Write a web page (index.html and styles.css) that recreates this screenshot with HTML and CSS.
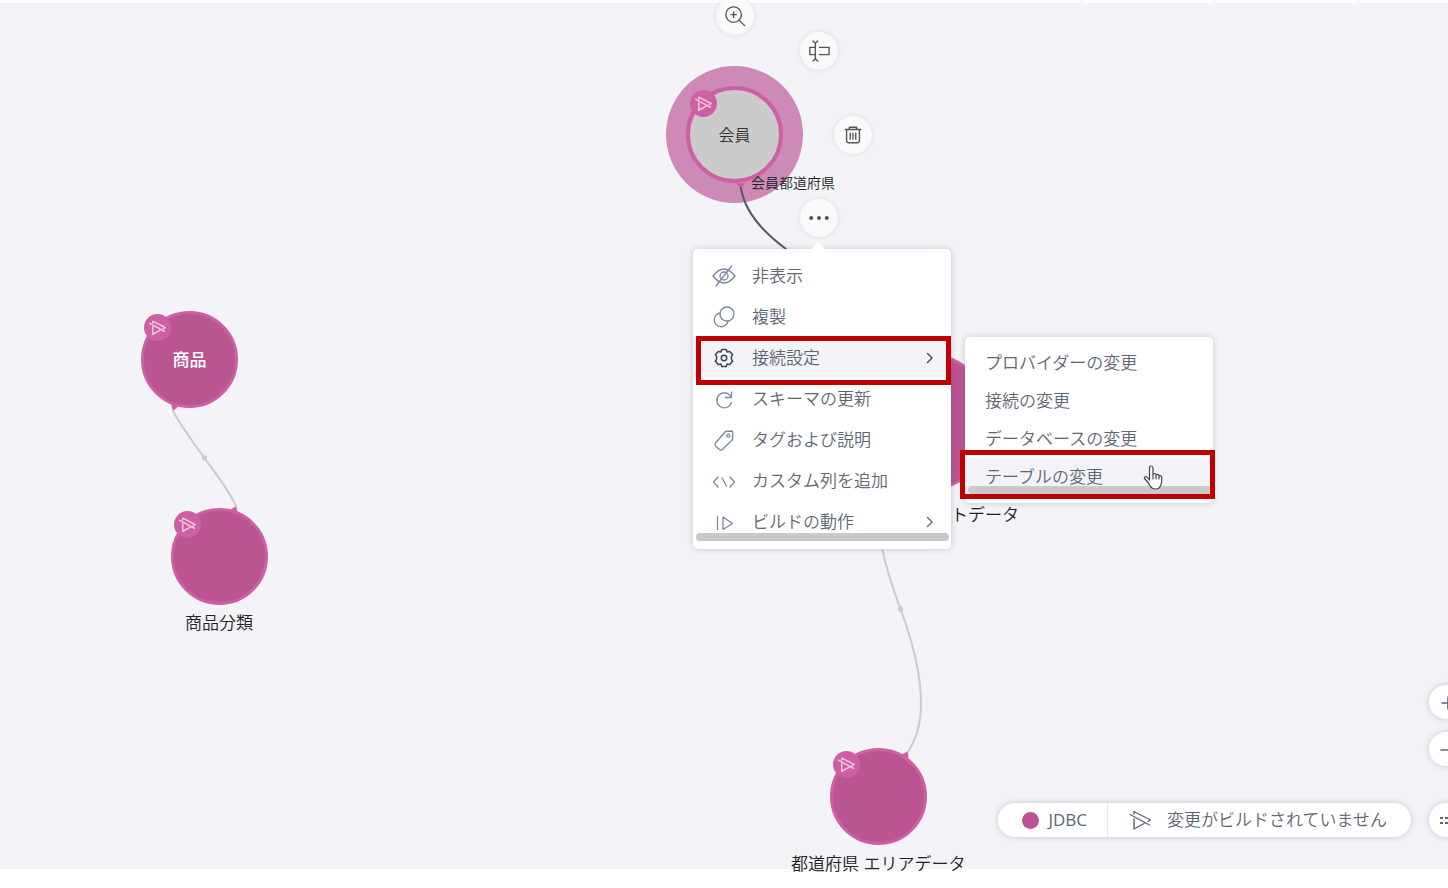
FILE: index.html
```html
<!DOCTYPE html>
<html lang="ja">
<head>
<meta charset="utf-8">
<title>データモデル</title>
<link rel="stylesheet" href="styles.css">
</head>
<body>
<svg class="symbols" aria-hidden="true">
  <symbol id="unbuilt" viewBox="0 0 24 20">
    <path d="M1 4.500 20.500 15M5 4V1.500L21.500 10l-2.500 1.500M15 13.500 5 19V9"/>
  </symbol>
</svg>
<div class="page">
  <header class="topbar"><span class="tab tab-a"></span><span class="tab tab-b"></span><span class="tab tab-c"></span></header>
  <main class="canvas"></main>
  <footer class="bottombar"></footer>

  <button class="node node-category" aria-label="商品分類"></button>
  <button class="node node-product">商品</button>
  <button class="node node-area" aria-label="都道府県 エリアデータ"></button>
  <button class="node node-behind" aria-label="データ"></button>
  <button class="node node-member">会員</button>

  <svg class="edges" width="1448" height="888" aria-hidden="true">
    <g class="pin">
      <path d="M171 404l8 2-6 5zM230 510l6-4 1.500 6zM901 755l7-4 .5 8zM736 183h9l-4 6z"/>
    </g>
    <path class="edge" d="M173 411C180 424 192 441 204.500 458S230 492 236 506"/>
    <path class="edge" d="M882 548C886 567 893 589 900.500 609C914 645 921 676 921 704C921 724 915 741 908 752"/>
    <path class="edge edge-active" d="M741 188C744 208 759 229 786 249"/>
    <circle class="joint" cx="204.500" cy="458" r="2.700"/>
    <circle class="joint" cx="900.500" cy="609" r="2.700"/>
  </svg>

  <span class="badge badge-product"><svg><use href="#unbuilt"/></svg></span>
  <span class="badge badge-category"><svg><use href="#unbuilt"/></svg></span>
  <span class="badge badge-area"><svg><use href="#unbuilt"/></svg></span>
  <span class="badge badge-member"><svg><use href="#unbuilt"/></svg></span>

  <span class="caption caption-category">商品分類</span>
  <span class="caption caption-area">都道府県 エリアデータ</span>
  <span class="caption caption-behind">トデータ</span>
  <span class="caption caption-join">会員都道府県</span>

  <button class="tool tool-zoom" aria-label="拡大">
    <svg viewBox="0 0 24 24"><circle cx="10.500" cy="10.500" r="8.500"/><path d="m16.500 16.500 6 6M7.500 10.500h6M10.500 7.500v6"/></svg>
  </button>
  <button class="tool tool-rename" aria-label="名前の変更">
    <svg viewBox="0 0 24 24"><path d="M8 3v18M5.500 1 8 3.500 10.500 1M5.500 23 8 20.500 10.500 23M8 8H2v8h6M12.500 8H23v8H12.500"/></svg>
  </button>
  <button class="tool tool-delete" aria-label="削除">
    <svg viewBox="0 0 24 24"><path d="M3.500 6h17M8 6V3.500h8V6M5 6v12q0 2.500 2.500 2.500h9q2.500 0 2.500-2.500V6M9 10v6.500M12 10v6.500M15 10v6.500"/></svg>
  </button>
  <button class="tool tool-more" aria-label="その他">
    <svg class="solid" viewBox="0 0 24 24"><circle cx="3.500" cy="12" r="2.200"/><circle cx="12" cy="12" r="2.200"/><circle cx="20.500" cy="12" r="2.200"/></svg>
  </button>

  <nav class="menu menu-main">
    <span class="caret"></span>
    <button class="item"><svg class="icon" viewBox="0 0 24 24"><path d="M1 12Q6.500 5 12 5t11 7q-5.500 7-11 7T1 12zM4 22 19.500 2"/><circle cx="12" cy="12" r="4"/></svg><span>非表示</span></button>
    <button class="item"><svg class="icon" viewBox="0 0 24 24"><circle cx="15" cy="9" r="7"/><path d="M8.400 7.800A7 7 0 1 0 16 16.500"/></svg><span>複製</span></button>
    <button class="item selected"><svg class="icon" viewBox="0 0 24 24"><path d="M9.700 3.500h4.600l.8 2.600 2.700-.7 2.800 3.400-1.200 1.700v3l1.200 1.700-2.800 3.400-2.700-.7-.8 2.600H9.700l-.8-2.600-2.700.7-2.800-3.400 1.200-1.700v-3L3.400 8.800l2.800-3.400 2.700.7z"/><circle cx="12" cy="12" r="2.700"/></svg><span>接続設定</span><svg class="chevron" viewBox="0 0 8 12"><path d="m1.500 1.500 4.500 4.500-4.500 4.500"/></svg></button>
    <button class="item"><svg class="icon" viewBox="0 0 24 24"><path d="M18.500 9A7.500 7.500 0 1 0 19.500 15.500M19.500 5v5.500h-6"/></svg><span>スキーマの更新</span></button>
    <button class="item"><svg class="icon" viewBox="0 0 24 24"><path d="M13.500 3.500 19 3q1.800 0 1.800 1.800L20.500 11.500 10.500 21.500q-1.500 1-3 0L3.500 18q-1-1.500 0-3z"/><circle cx="16.300" cy="7.700" r="1.500"/></svg><span>タグおよび説明</span></button>
    <button class="item"><svg class="icon" viewBox="0 0 24 24"><path d="m6 8-4.500 5L6 18M18 8l4.500 5-4.500 5M10 9l4.500 8"/></svg><span>カスタム列を追加</span></button>
    <button class="item"><svg class="icon" viewBox="0 0 24 24"><path d="M5.500 6.500v13M11 7v12.500l9.500-6z"/></svg><span>ビルドの動作</span><svg class="chevron" viewBox="0 0 8 12"><path d="m1.500 1.500 4.500 4.500-4.500 4.500"/></svg></button>
    <span class="scrollbar"></span>
  </nav>

  <nav class="menu menu-sub">
    <button class="item">プロバイダーの変更</button>
    <button class="item">接続の変更</button>
    <button class="item">データベースの変更</button>
    <button class="item selected">テーブルの変更</button>
    <span class="scrollbar"></span>
  </nav>

  <span class="callout callout-main"></span>
  <span class="callout callout-sub"></span>
  <svg class="pointer" viewBox="0 0 20 25" aria-hidden="true"><path d="M6.500 15V3q0-2 1.700-2T10 3v7q0-1.500 1.500-1.500T13 10v.7q0-1.400 1.500-1.400T16 11v.8q0-1.200 1.300-1.200T18.700 12v4q0 4-2.700 7-3.500 2-7 0-2.500-2.500-4-5.500L1.500 13.500q-.5-2 1.500-2 1.500.5 3.500 3.500M10 10v4M13 10.500V14M16 11.500V14"/></svg>

  <div class="zoom-controls">
    <button class="round" aria-label="ズームイン"><svg viewBox="0 0 16 16"><path d="M4 9h12M10 3v12"/></svg></button>
    <button class="round" aria-label="ズームアウト"><svg viewBox="0 0 16 16"><path d="M3 9h12"/></svg></button>
  </div>
  <button class="round round-layout" aria-label="レイアウト"><svg class="solid" viewBox="0 0 16 16"><path d="M2 5h3v2H2zM7 5h3v2H7zM12 5h3v2h-3zM2 10h3v2H2zM7 10h3v2H7zM12 10h3v2h-3z"/></svg></button>
  <div class="legend">
    <span class="legend-source"><i class="dot"></i>JDBC</span>
    <span class="legend-state"><svg><use href="#unbuilt"/></svg>変更がビルドされていません</span>
  </div>
</div>
</body>
</html>
```

FILE: styles.css
```css
* { box-sizing: border-box; }
body {
  margin: 0;
  color: #333;
  font-family: "Open Sans", "Noto Sans CJK JP", sans-serif;
  font-size: 17px;
  font-weight: 350;
  line-height: 24px;
}
button {
  margin: 0;
  padding: 0;
  border: 0;
  background: none;
  color: inherit;
  font: inherit;
}
svg {
  display: block;
  fill: none;
  stroke: currentColor;
  stroke-linecap: round;
  stroke-linejoin: round;
}
.symbols { position: absolute; width: 0; height: 0; }
.solid { fill: currentColor; stroke: none; }

.page {
  position: relative;
  display: flex;
  flex-direction: column;
  height: 100vh;
  overflow: hidden;
  background: #fff;
}
.topbar { display: flex; justify-content: flex-end; height: 3px; }
.tab { border-left: 1px solid #e4e4e8; }
.tab-a { width: 133px; }
.tab-b { width: 144px; }
.tab-c { width: 90px; }
.canvas { flex: 1; background: #f3f3f8; }
.bottombar { height: 19px; }

/* Diagram */
.node {
  position: absolute;
  width: 97px;
  height: 97px;
  border: 3px solid #cc60a2;
  border-radius: 50%;
  background: #bb5592;
  color: #fff;
}
.node-product { left: 141px; top: 311px; font-weight: 500; }
.node-category { left: 171px; top: 508px; }
.node-area { left: 830px; top: 748px; }
.node-behind { left: 857px; top: 353px; width: 138px; height: 138px; }
.node-member {
  left: 686px;
  top: 86px;
  border-width: 4px;
  background: #cbcbcb;
  color: #333;
  font-size: 16px;
  box-shadow: 0 0 0 20px #ce8ab6;
}
.edges { position: absolute; left: 0; top: 0; pointer-events: none; }
.pin { fill: #cc60a2; stroke: none; }
.edge { stroke: #c9ccd5; stroke-width: 2; }
.edge-active { stroke: #58595c; }
.joint { fill: #c9ccd5; stroke: none; }
.badge {
  position: absolute;
  display: grid;
  place-items: center;
  width: 27px;
  height: 27px;
  border-radius: 50%;
  background: #cc60a2;
  color: #f3c6e0;
}
.badge svg { width: 18px; height: 15px; stroke-width: 2; }
.badge-product { left: 144px; top: 314px; }
.badge-category { left: 174px; top: 511px; }
.badge-area { left: 833px; top: 751px; }
.badge-member { left: 690px; top: 90px; }
.caption { position: absolute; color: #222; white-space: nowrap; }
.caption-category { left: 185px; top: 611px; }
.caption-area { left: 791px; top: 852px; }
.caption-behind { left: 951px; top: 503px; }
.caption-join { left: 751px; top: 171px; font-size: 14px; }

.tool {
  position: absolute;
  display: grid;
  place-items: center;
  width: 38px;
  height: 38px;
  border-radius: 50%;
  background: #fafafb;
  color: #55565a;
  box-shadow: 0 0 5px rgba(80, 80, 110, .14);
}
.tool svg { width: 22px; height: 22px; stroke-width: 1.5; }
.tool-zoom { left: 716px; top: -3px; }
.tool-rename { left: 800px; top: 32px; }
.tool-delete { left: 834px; top: 116px; }
.tool-more { left: 800px; top: 199px; }

/* Menus */
.menu {
  position: absolute;
  display: flex;
  flex-direction: column;
  border-radius: 5px;
  background: #fff;
  color: #5e6675;
  box-shadow: 0 0 6px rgba(60, 60, 90, .25);
}
.menu-main { left: 693px; top: 249px; width: 258px; padding: 6px 0 7px; }
.menu-sub { left: 965px; top: 337px; width: 248px; padding: 7px 0; }
.item { display: flex; align-items: center; text-align: left; }
.menu-main .item { gap: 16px; height: 41px; padding: 0 17px 0 19px; }
.menu-sub .item { height: 38px; padding: 0 20px; }
.item.selected { background: #f3f3f8; }
.icon { width: 24px; height: 24px; color: #7c879b; stroke-width: 1.3; }
.selected .icon { color: #3f475a; stroke-width: 1.5; }
.chevron { width: 8px; height: 12px; margin-left: auto; stroke-width: 1.4; }
.selected .chevron { color: #3f475a; }
.scrollbar {
  position: absolute;
  left: 3px;
  right: 2px;
  bottom: 8px;
  height: 8px;
  border-radius: 4px;
  background: #c9c9c9;
}
.menu-sub .scrollbar { bottom: 9px; }
.caret {
  position: absolute;
  left: 118px;
  top: -7px;
  border: 7px solid transparent;
  border-top: 0;
  border-bottom-color: #fff;
}
.callout { position: absolute; border: 5px solid #c00000; width: 255px; height: 49px; }
.callout-main { left: 696px; top: 336px; }
.callout-sub { left: 960px; top: 450px; }
.pointer {
  position: absolute;
  left: 1143px;
  top: 465px;
  width: 20px;
  height: 25px;
  fill: #fff;
  stroke: #444;
  stroke-width: 1.2;
}

/* Canvas controls */
.round {
  display: grid;
  place-items: center;
  width: 34px;
  height: 34px;
  border-radius: 50%;
  background: #fff;
  color: #5e6675;
  box-shadow: 0 0 6px rgba(60, 60, 90, .25);
}
.round svg { width: 16px; height: 16px; stroke-width: 1.6; }
.zoom-controls { position: absolute; right: -15px; bottom: 122px; display: grid; gap: 13px; }
.round-layout { position: absolute; right: -15px; bottom: 51px; }
.legend {
  position: absolute;
  right: 37px;
  bottom: 51px;
  display: flex;
  height: 34px;
  border-radius: 17px;
  background: #fff;
  color: #5e6675;
  box-shadow: 0 0 6px rgba(60, 60, 90, .25);
}
.legend-source, .legend-state { display: flex; align-items: center; white-space: nowrap; }
.legend-source { gap: 9px; padding: 0 20px 0 24px; font-weight: 400; }
.legend-state { gap: 14px; padding: 0 24px 0 21px; border-left: 1px solid #e8e8ee; }
.legend-state svg { width: 24px; height: 20px; stroke-width: 1.4; }
.dot { width: 17px; height: 17px; border-radius: 50%; background: #bb5592; }
```
